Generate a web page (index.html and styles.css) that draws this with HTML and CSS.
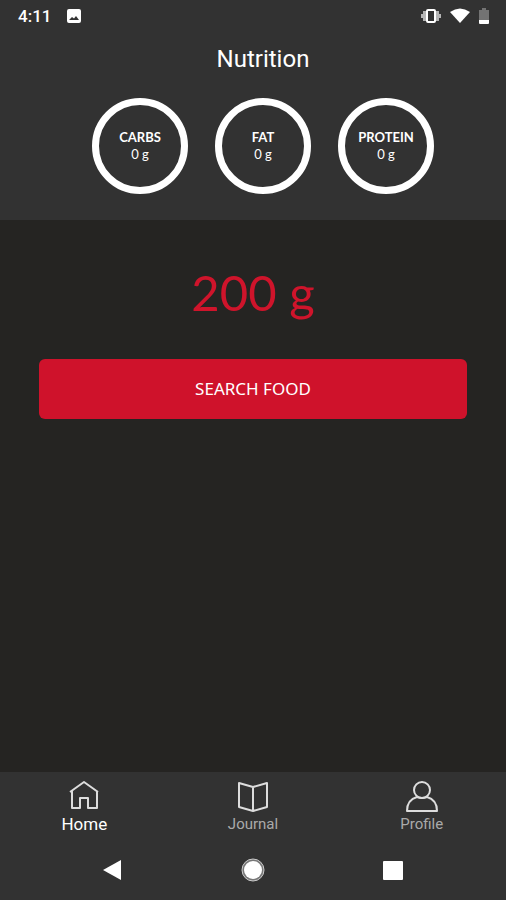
FILE: index.html
```html
<!DOCTYPE html>
<html lang="en">
<head>
<meta charset="utf-8">
<meta name="viewport" content="width=device-width, initial-scale=1">
<title>Nutrition</title>
<link rel="stylesheet" href="styles.css">
</head>
<body>
<div class="app">
  <header class="header">
    <div class="status">
      <time class="clock">4:11</time>
      <svg class="photo" width="16" height="16" viewBox="0 0 16 16" aria-hidden="true"><path fill="#fff" fill-rule="evenodd" d="M3 1h10q2 0 2 2v10q0 2-2 2H3q-2 0-2-2V3q0-2 2-2zM3 12h10L10 8l-2 2.500L6 9z"/></svg>
      <div class="status-icons">
        <svg width="22" height="16" viewBox="0 0 22 16" aria-hidden="true"><path fill="#b5b5b5" d="M1 6h2V3h3v10H3v-3H1zM21 6h-2V3h-3v10h3v-3h2z"/><rect x="7" y="2" width="8" height="12" rx="1" fill="none" stroke="#fff" stroke-width="2"/></svg>
        <svg width="20" height="16" viewBox="0 0 20 16" aria-hidden="true"><path fill="#fff" d="M0 4Q10-3 20 4L10 15z"/></svg>
        <svg width="12" height="18" viewBox="0 0 12 18" aria-hidden="true"><path fill="#737373" d="M1 3h3V1h4v2h3v11H1z"/><path fill="#fff" d="M1 13h10v3q0 1-1 1H2q-1 0-1-1z"/></svg>
      </div>
    </div>
    <h1 class="title">Nutrition</h1>
    <dl class="macros">
      <div class="macro"><dt>CARBS</dt><dd>0 g</dd></div>
      <div class="macro"><dt>FAT</dt><dd>0 g</dd></div>
      <div class="macro"><dt>PROTEIN</dt><dd>0 g</dd></div>
    </dl>
  </header>
  <main class="content">
    <p class="amount">200 g</p>
    <button class="search" type="button">SEARCH FOOD</button>
  </main>
  <footer class="footer">
    <nav class="tabs" aria-label="Main">
      <a class="tab active" href="#home" aria-current="page">
        <svg width="34" height="32" viewBox="0 0 34 32" aria-hidden="true"><path d="M3 12 17 2l14 10M5 11v17h8V18h8v10h9V11"/></svg>
        <span>Home</span>
      </a>
      <a class="tab" href="#journal">
        <svg width="34" height="32" viewBox="0 0 34 32" aria-hidden="true"><path d="M3 3 17 7l14-4v24l-14 4-14-4zM17 7v24"/></svg>
        <span>Journal</span>
      </a>
      <a class="tab" href="#profile">
        <svg width="34" height="32" viewBox="0 0 34 32" aria-hidden="true"><circle cx="17" cy="10" r="8"/><path d="M12 17C5 19 2 24 2 31h30c0-7-3-12-10-14q-5 2-10 0z"/></svg>
        <span>Profile</span>
      </a>
    </nav>
    <div class="system">
      <button type="button" aria-label="Back"><svg width="24" height="24" viewBox="0 0 24 24"><path d="M2 12 20 2v20z"/></svg></button>
      <button type="button" aria-label="Home screen"><svg width="24" height="24" viewBox="0 0 24 24"><circle class="ring" cx="12" cy="12" r="11"/><circle cx="12" cy="12" r="9"/></svg></button>
      <button type="button" aria-label="Recent apps"><svg width="24" height="24" viewBox="0 0 24 24"><rect x="2" y="3" width="20" height="19" rx="1"/></svg></button>
    </div>
  </footer>
</div>
</body>
</html>
```
FILE: styles.css
```css
* { box-sizing: border-box; }
body {
  margin: 0;
  background: #252422;
  color: #fff;
  font-family: Lato, "Open Sans", sans-serif;
}
.app { min-height: 100vh; display: flex; flex-direction: column; }
.header { background: #323232; padding-bottom: 26px; }
.status {
  display: flex;
  align-items: center;
  height: 32px;
  padding: 0 16px 0 18px;
}
.clock { font: 500 17px/24px Roboto, sans-serif; }
.photo { margin-left: 15px; }
.status-icons { margin-left: auto; display: flex; align-items: center; gap: 8px; }
.title {
  margin: 11px 0 23px;
  padding-left: 20px;
  text-align: center;
  font: 400 24px/32px Roboto, sans-serif;
}
.macros {
  margin: 0;
  padding-left: 20px;
  display: flex;
  justify-content: center;
  gap: 27px;
}
.macro {
  width: 96px;
  height: 96px;
  border: 7px solid #fff;
  border-radius: 50%;
  display: flex;
  flex-direction: column;
  align-items: center;
  justify-content: center;
  font-size: 13px;
  line-height: 17px;
}
.macro dt { font-weight: 700; }
.macro dd { margin: 0; }
.content { flex: 1; padding: 42px 39px; }
.amount {
  margin: 0 0 37px;
  text-align: center;
  color: #cf142b;
  font-size: 49px;
  line-height: 60px;
}
.search {
  display: block;
  width: 100%;
  height: 60px;
  border: 0;
  border-radius: 6px;
  background: #cf122b;
  color: #fff;
  font: 400 17px/24px "Noto Sans", sans-serif;
}
.footer { background: #323232; }
.tabs { display: flex; padding-top: 8px; }
.tab {
  flex: 1;
  display: flex;
  flex-direction: column;
  align-items: center;
  color: #aaa;
  text-decoration: none;
  font: 400 15px/24px Roboto, sans-serif;
}
.tab svg { fill: none; stroke: #ddd; stroke-width: 2; stroke-linejoin: round; }
.active { color: #fff; font-size: 17px; }
.system { display: flex; justify-content: center; gap: 116px; padding: 22px 0 18px; }
.system button { display: block; padding: 0; border: 0; background: none; }
.system svg { display: block; fill: #fff; }
.system .ring { fill: #777; stroke: #ccc; stroke-width: 1; }
```
